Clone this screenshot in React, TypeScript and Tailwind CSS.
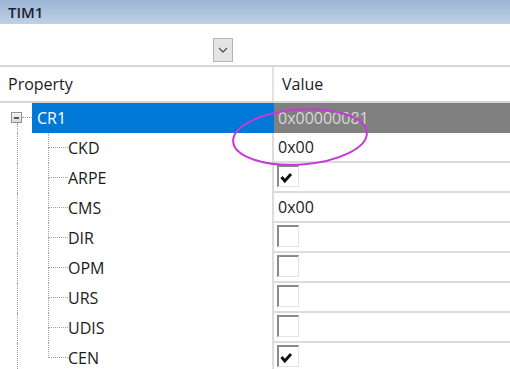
import React from 'react';

type Field = { name: string; value?: string; checked?: boolean };

const fields: Field[] = [
  { name: 'CKD', value: '0x00' },
  { name: 'ARPE', checked: true },
  { name: 'CMS', value: '0x00' },
  { name: 'DIR', checked: false },
  { name: 'OPM', checked: false },
  { name: 'URS', checked: false },
  { name: 'UDIS', checked: false },
  { name: 'CEN', checked: true },
];

const Checkbox = ({ checked }: { checked: boolean }) => (
  <div className="mt-[2px] h-[22px] w-[22px] border-t-2 border-l-2 border-r border-b border-t-[#8a8a8a] border-l-[#8a8a8a] border-r-[#e4e4e4] border-b-[#e4e4e4] bg-white">
    {checked && (
      <svg width="19" height="19" viewBox="0 0 19 19">
        <path d="M2.5 10 L5.8 14 L12 7" fill="none" stroke="#111" strokeWidth="2.8" strokeLinejoin="miter" />
      </svg>
    )}
  </div>
);

export default function App() {
  return (
    <div className="relative h-[369px] w-[510px] overflow-hidden bg-white text-[16px] text-[#1b1b1b]" style={{ fontFamily: '"Open Sans", "Noto Sans", sans-serif' }}>
      {/* title */}
      <div className="flex h-[24px] items-center bg-gradient-to-b from-[#9cb5d4] to-[#bed1e7] pl-[8px] text-[15px] font-semibold text-[#1c2230]">
        TIM1
      </div>

      {/* toolbar */}
      <div className="flex h-[43px] items-start border-b-2 border-[#d6d6d6] pl-[213px] pt-[14px]">
        <div className="flex h-[24px] w-[20px] items-center justify-center border border-[#b4b4b4] bg-[#e4e4e4]">
          <svg width="10" height="6" viewBox="0 0 10 6">
            <path d="M1 1 L5 5 L9 1" fill="none" stroke="#555" strokeWidth="1.3" />
          </svg>
        </div>
      </div>

      {/* header */}
      <div className="flex h-[36px] border-b-2 border-[#d6d6d6]">
        <div className="flex w-[272px] items-center pl-[8px]">Property</div>
        <div className="flex flex-1 items-center border-l-2 border-[#e2e2e2] pl-[8px]">Value</div>
      </div>

      {/* CR1 */}
      <div className="flex h-[30px]">
        <div className="flex w-[272px]">
          <div className="w-[11px]" />
          <div className="flex w-[11px] flex-col">
            <div className="mt-[9px] flex h-[11px] w-[11px] items-center justify-center border border-[#939393] bg-gradient-to-b from-[#f4f4f4] to-[#d8d8d8]">
              <div className="h-[2px] w-[5px] bg-[#4a5870]" />
            </div>
            <div className="ml-[6px] flex-1 border-l border-dotted border-[#a0a0a0]" />
          </div>
          <div className="mt-[14px] h-0 w-[10px] border-t border-dotted border-[#a0a0a0]" />
          <div className="flex flex-1 items-center bg-[#0078d7] pl-[5px] text-white">CR1</div>
        </div>
        <div className="flex flex-1 items-center border-l-2 border-[#0078d7] bg-[#808080] pl-[4px] text-[#d9d9d9]">
          0x00000081
        </div>
      </div>

      {/* fields */}
      {fields.map((f, i) => {
        const last = i === fields.length - 1;
        return (
          <div key={f.name} className="flex h-[30px]">
            <div className="flex w-[272px]">
              <div className="w-[17px]" />
              <div className="w-[31px] border-l border-dotted border-[#a0a0a0]" />
              <div className="flex w-[20px] flex-col">
                <div className="h-[15px] border-l border-b border-dotted border-[#a0a0a0]" />
                <div className={'flex-1 ' + (last ? '' : 'border-l border-dotted border-[#a0a0a0]')} />
              </div>
              <div className="flex items-center">{f.name}</div>
            </div>
            <div className="flex flex-1 items-start border-l-2 border-b-2 border-[#dcdcdc] pl-[3px]">
              {f.value !== undefined ? (
                <div className="flex h-full items-center pl-[1px]">{f.value}</div>
              ) : (
                <Checkbox checked={!!f.checked} />
              )}
            </div>
          </div>
        );
      })}

      {/* annotation ellipse */}
      <svg className="pointer-events-none absolute left-[226px] top-[104px]" width="150" height="66" viewBox="0 0 150 66">
        <ellipse cx="74" cy="33" rx="67" ry="27.5" fill="none" stroke="#c63ad8" strokeWidth="2" transform="rotate(-4 74 33)" />
      </svg>
    </div>
  );
}
